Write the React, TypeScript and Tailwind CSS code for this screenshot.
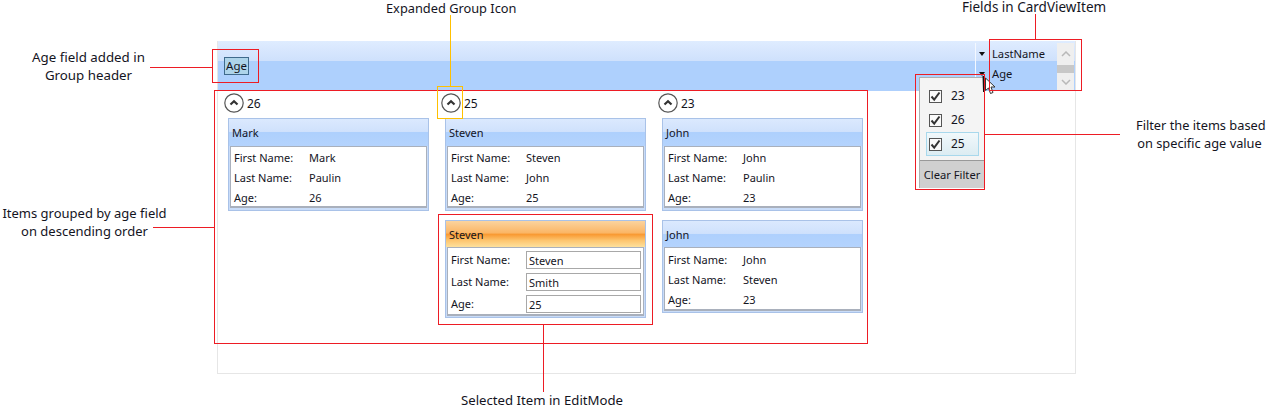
import React from "react";

const font = { fontFamily: '"Noto Sans", "Open Sans", sans-serif' };

function GroupHead({ n }: { n: string }) {
  return (
    <div className="h-[27px] pl-[6px] flex items-start pt-[2px]">
      <svg width="20" height="20" viewBox="0 0 20 20" className="shrink-0">
        <circle cx="10" cy="10" r="9.2" fill="#fff" stroke="#555" strokeWidth="1.2" />
        <path d="M6.5 11.5 L10 8.2 L13.5 11.5" fill="none" stroke="#333" strokeWidth="2.2" />
      </svg>
      <span className="ml-[3px] mt-[1px] text-[12px] leading-[20px]">{n}</span>
    </div>
  );
}

function Row({ label, value }: { label: string; value: string }) {
  return (
    <div className="flex h-[20px] items-center pl-[2px]">
      <span className="w-[75px] shrink-0">{label}</span>
      <span>{value}</span>
    </div>
  );
}

function Card({ name, first, last, age }: { name: string; first: string; last: string; age: string }) {
  return (
    <div className="ml-[10px] w-[201px] h-[93px] border border-[#a9c2e8] bg-[#c9dcf8] flex flex-col">
      <div className="h-[27px] shrink-0 pl-[3px] pt-[5px] leading-[18px] bg-[linear-gradient(#dbe9fe_0%,#cfe1fc_48%,#aed0fd_50%,#b4d3fd_100%)]">{name}</div>
      <div className="mx-[1px] h-[62px] border border-b-2 border-[#a9b0bc] bg-white pt-[1px] pl-[1px]">
        <Row label="First Name:" value={first} />
        <Row label="Last Name:" value={last} />
        <Row label="Age:" value={age} />
      </div>
    </div>
  );
}

function LowerCard() {
  return (
    <div className="ml-[10px] mt-[9px] w-[201px] h-[93px] border border-[#a9c2e8] bg-[#c9dcf8] flex flex-col">
      <div className="h-[26px] shrink-0 pl-[3px] pt-[5px] leading-[18px] bg-[linear-gradient(#dbe9fe_0%,#cfe1fc_48%,#aed0fd_50%,#b4d3fd_100%)]">John</div>
      <div className="mx-[1px] h-[64px] border border-b-2 border-[#a9b0bc] bg-white pt-[2px] pl-[1px]">
        <Row label="First Name:" value="John" />
        <Row label="Last Name:" value="Steven" />
        <Row label="Age:" value="23" />
      </div>
    </div>
  );
}

function EditRow({ label, value }: { label: string; value: string }) {
  return (
    <div className="flex h-[18px] items-center pl-[3px] mb-[4px]">
      <span className="w-[75px] shrink-0">{label}</span>
      <div className="w-[115px] h-[18px] border border-[#a8a8a8] pl-[2px] leading-[17px]">{value}</div>
    </div>
  );
}

function EditCard() {
  return (
    <div className="ml-[10px] mt-[9px] w-[201px] h-[98px] border border-[#a9c2e8] bg-[#c9dcf8] flex flex-col">
      <div className="h-[26px] shrink-0 pl-[3px] pt-[5px] leading-[18px] bg-[linear-gradient(#fbd39e_0%,#fbb666_45%,#f99a33_52%,#fdc56f_75%,#fde09c_100%)]">Steven</div>
      <div className="mx-[1px] h-[69px] border border-b-2 border-[#a9b0bc] bg-white pt-[3px]">
        <EditRow label="First Name:" value="Steven" />
        <EditRow label="Last Name:" value="Smith" />
        <EditRow label="Age:" value="25" />
      </div>
    </div>
  );
}

function Check({ value, active = false }: { value: string; active?: boolean }) {
  return (
    <div className={`ml-[6px] w-[53px] h-[24px] flex items-center pl-[2px] border ${active ? "border-[#a8d8ec] bg-[linear-gradient(#f1f8fb,#dcecf2)]" : "border-transparent"}`}>
      <div className="w-[13px] h-[13px] border border-[#555] bg-[#fafafa] flex items-center justify-center">
        <svg width="11" height="11" viewBox="0 0 11 11">
          <path d="M1.5 5.5 L4.2 8.6 L9.5 1.5" fill="none" stroke="#333" strokeWidth="2" />
        </svg>
      </div>
      <span className="ml-[9px] text-[12px]">{value}</span>
    </div>
  );
}

function Arrow() {
  return <div className="w-0 h-0 border-l-[3.5px] border-r-[3.5px] border-t-[4px] border-l-transparent border-r-transparent border-t-[#111]" />;
}

function Note({ className, children }: { className: string; children: React.ReactNode }) {
  return <div className={`absolute text-center whitespace-nowrap ${className}`}>{children}</div>;
}

function Box({ className }: { className: string }) {
  return <div className={`absolute border pointer-events-none ${className}`} />;
}

export default function App() {
  return (
    <div style={font} className="relative w-[1274px] h-[411px] bg-white text-[11px] text-[#14141e] pt-[41px] pl-[217px]">
      {/* control */}
      <div className="w-[859px] h-[333px] border border-t-0 border-[#e6e6e6]">
        <div className="h-[50px] flex bg-[linear-gradient(#dfecff_0%,#cfe1fc_39%,#aed0fd_41%,#aed0fd_100%)]">
          <div className="w-[757px] pl-[6px] pt-[16px]">
            <div className="w-[25px] h-[18px] border border-[#3f6a8c] bg-[#aed4ea] text-center leading-[16px] text-[11.5px]">Age</div>
          </div>
          <div className="w-px mt-[2px] bg-[#f4f8ff]" />
          <div className="w-[16px] flex flex-col items-start pl-[3px]">
            <div className="h-[15px] flex items-end"><Arrow /></div>
            <div className="h-[20px] flex items-end"><Arrow /></div>
          </div>
          <div className="w-[65px] pt-[3px] text-[11.2px]">
            <div className="h-[20px] leading-[20px]">LastName</div>
            <div className="h-[20px] leading-[20px]">Age</div>
          </div>
          <div className="w-[17px] mt-[2px] bg-[#efefef] flex flex-col items-center">
            <svg width="10" height="6" viewBox="0 0 10 6" className="mt-[8px]"><path d="M1 5 L5 1 L9 5" fill="none" stroke="#b8b8b8" strokeWidth="1.5" /></svg>
            <div className="w-full h-[8px] mt-[8px] bg-[#c8c8c8]" />
            <svg width="10" height="6" viewBox="0 0 10 6" className="mt-[6px]"><path d="M1 1 L5 5 L9 1" fill="none" stroke="#b8b8b8" strokeWidth="1.5" /></svg>
          </div>
        </div>
        <div className="flex">
          <div className="w-[217px]">
            <GroupHead n="26" />
            <Card name="Mark" first="Mark" last="Paulin" age="26" />
          </div>
          <div className="w-[217px]">
            <GroupHead n="25" />
            <Card name="Steven" first="Steven" last="John" age="25" />
            <EditCard />
          </div>
          <div className="w-[217px]">
            <GroupHead n="23" />
            <Card name="John" first="John" last="Paulin" age="23" />
            <LowerCard />
          </div>
        </div>
      </div>

      {/* filter popup */}
      <div className="absolute left-[919px] top-[77px] w-[65px] h-[111px] bg-[#f4f4f4] border-t border-l border-[#b0b0b0] flex flex-col">
        <div className="h-[83px] pt-[6px]">
          <Check value="23" />
          <Check value="26" />
          <Check value="25" active />
        </div>
        <div className="flex-1 bg-[#d0d0d0] border-t border-[#999] text-center leading-[27px] text-[11.2px] whitespace-nowrap">Clear Filter</div>
      </div>

      {/* mouse cursor */}
      <svg className="absolute left-[982px] top-[74px]" width="16" height="22" viewBox="0 0 16 22">
        <path d="M1.5 2 L2 18" stroke="#111" strokeWidth="2" fill="none" />
        <path d="M3.5 4 L3.5 16.5 L6.5 14 L8.5 19.5 L11 18.5 L9 13 L13 13 Z" fill="#fff" stroke="#333" strokeWidth="1" />
      </svg>

      {/* annotations */}
      <Note className="left-[32px] top-[48px] w-[113px] text-[13.3px] leading-[18px]">Age field added in<br />Group header</Note>
      <Note className="left-[2px] top-[204px] w-[165px] text-[13px] leading-[18px]">Items grouped by age field<br />on descending order</Note>
      <Note className="left-[386px] top-[1px] w-[130px] text-[12.8px] leading-[14px]">Expanded Group Icon</Note>
      <Note className="left-[962px] top-[0px] w-[144px] text-[13.5px] leading-[14px]">Fields in CardViewItem</Note>
      <Note className="left-[1136px] top-[116px] w-[127px] text-[12.8px] leading-[18px]">Filter the items based<br />on specific age value</Note>
      <Note className="left-[460px] top-[391px] w-[164px] text-[13.2px] leading-[18px]">Selected Item in EditMode</Note>

      <Box className="left-[212px] top-[49px] w-[47px] h-[34px] border-[#ed1c24]" />
      <Box className="left-[214px] top-[90px] w-[654px] h-[254px] border-[#ed1c24]" />
      <Box className="left-[438px] top-[214px] w-[215px] h-[111px] border-[#ed1c24]" />
      <Box className="left-[437px] top-[86px] w-[26px] h-[33px] border-[#ffc000]" />
      <Box className="left-[989px] top-[39px] w-[93px] h-[52px] border-[#ed1c24]" />
      <Box className="left-[915px] top-[74px] w-[70px] h-[116px] border-[#ed1c24]" />

      <div className="absolute left-[150px] top-[67px] w-[62px] h-px bg-[#ed1c24]" />
      <div className="absolute left-[153px] top-[227px] w-[61px] h-px bg-[#ed1c24]" />
      <div className="absolute left-[985px] top-[134px] w-[135px] h-px bg-[#ed1c24]" />
      <div className="absolute left-[450px] top-[15px] w-px h-[71px] bg-[#ffc000]" />
      <div className="absolute left-[1035px] top-[14px] w-px h-[25px] bg-[#ed1c24]" />
      <div className="absolute left-[543px] top-[325px] w-px h-[67px] bg-[#ed1c24]" />
    </div>
  );
}
